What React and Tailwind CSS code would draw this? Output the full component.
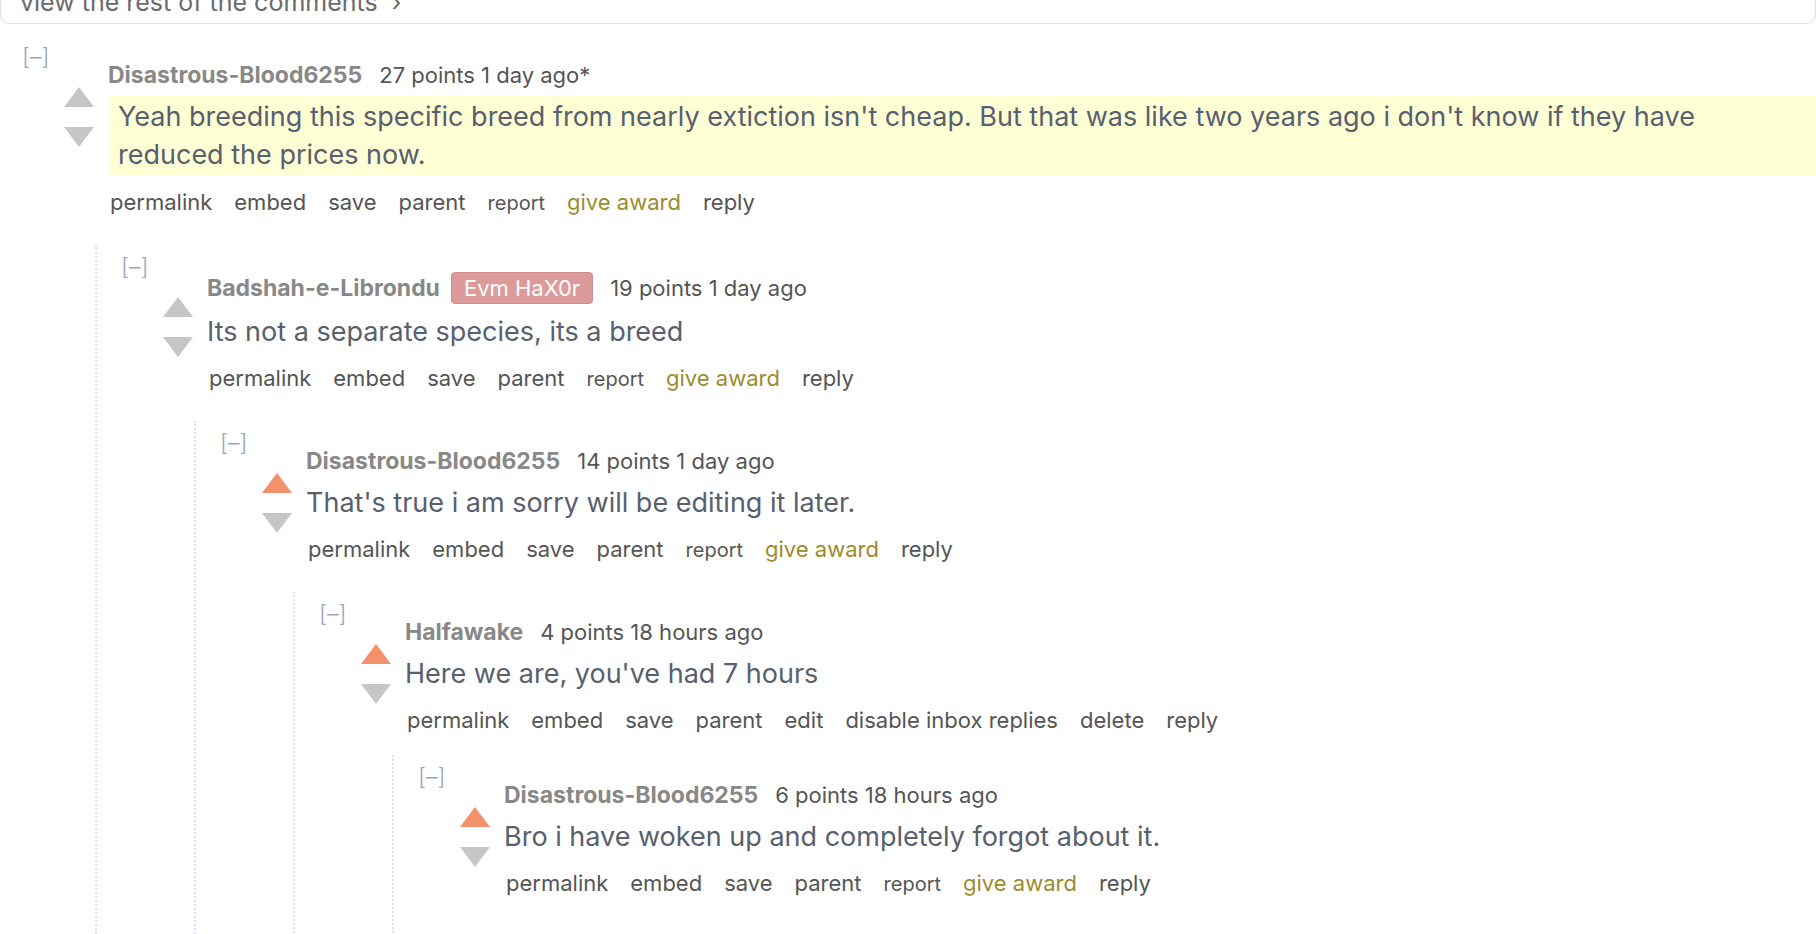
import React from "react";

const comments = {
    user: "Disastrous-Blood6255",
    meta: "27 points 1 day ago*",
    body: "Yeah breeding this specific breed from nearly extiction isn't cheap. But that was like two years ago i don't know if they have reduced the prices now.",
    highlight: true,
    reply: {
        user: "Badshah-e-Librondu",
        flair: "Evm HaX0r",
        meta: "19 points 1 day ago",
        body: "Its not a separate species, its a breed",
        reply: {
            user: "Disastrous-Blood6255",
            meta: "14 points 1 day ago",
            body: "That's true i am sorry will be editing it later.",
            upvoted: true,
            reply: {
                user: "Halfawake",
                meta: "4 points 18 hours ago",
                body: "Here we are, you've had 7 hours",
                upvoted: true,
                mine: true,
                reply: {
                    user: "Disastrous-Blood6255",
                    meta: "6 points 18 hours ago",
                    body: "Bro i have woken up and completely forgot about it.",
                    upvoted: true,
                    last: true,
                },
            },
        },
    },
};

function Arrow({dir, on}) {
    return (
        <svg width="30" height="20" viewBox="0 0 30 20" className="block">
            {dir === "up"
                ? <polygon points="15,0 30,20 0,20" fill={on ? "#f2916a" : "#c6c6c6"}/>
                : <polygon points="0,0 30,0 15,20" fill="#c6c6c6"/>}
        </svg>
    );
}

function Actions({mine}) {
    if (mine) {
        return (
            <div className="flex items-baseline gap-[22px] text-[22px] leading-[28px] text-[#555]">
                <span>permalink</span>
                <span>embed</span>
                <span>save</span>
                <span>parent</span>
                <span>edit</span>
                <span>disable inbox replies</span>
                <span>delete</span>
                <span>reply</span>
            </div>
        );
    }
    return (
        <div className="flex items-baseline gap-[22px] pb-[7px] text-[22px] leading-[28px] text-[#555]">
            <span>permalink</span>
            <span>embed</span>
            <span>save</span>
            <span>parent</span>
            <span className="text-[20px]">report</span>
            <span className="text-[#9d8b2c]">give award</span>
            <span>reply</span>
        </div>
    );
}

function Comment({c}) {
    return (
        <div>
            <div className="flex">
                <div className="w-[84px] shrink-0">
                    <div className="-ml-[2px] text-[23px] font-light leading-[20px] text-[#9aa8ba]">[–]</div>
                    <div className="ml-[40px] mt-[20px] flex flex-col gap-[20px]">
                        <Arrow dir="up" on={c.upvoted}/>
                        <Arrow dir="down"/>
                    </div>
                </div>
                <div className="flex-1 min-w-0 pt-[14px]">
                    <div className={c.flair ? "flex items-center leading-[28px] mt-[1px] mb-[3px]" : "flex items-center leading-[28px]"}>
                        <span className="text-[23px] font-bold text-[#888]">{c.user}</span>
                        {c.flair && (
                            <span className="ml-[11px] rounded-[4px] border border-[#cf8b8b] bg-[#dc9a9a] px-[12px] text-[22px] leading-[30px] text-white">{c.flair}</span>
                        )}
                        <span className="ml-[17px] text-[22px] text-[#555]">{c.meta}</span>
                    </div>
                    {c.highlight ? (
                        <div className="mt-[7px] ml-[2px] bg-[#ffffd6] px-[8px] py-[2px] text-[27px] leading-[38px] text-[#58606e]">
                            <p className="max-w-[1640px]">{c.body}</p>
                        </div>
                    ) : (
                        <div className="mt-[7px] py-[2px] text-[27px] leading-[38px] text-[#58606e]">{c.body}</div>
                    )}
                    <div className={c.highlight ? "mt-[12px] ml-[2px]" : "mt-[11px] ml-[2px]"}>
                        <Actions mine={c.mine}/>
                    </div>
                </div>
            </div>
            {c.reply && (
                <div className="ml-[71px] mt-[21px] border-l-2 border-dotted border-[#ddf] pl-[26px] pt-[12px]">
                    <Comment c={c.reply}/>
                </div>
            )}
            {c.last && <div className="h-[200px]"/>}
        </div>
    );
}

export default function App() {
    return (
        <div className="h-[934px] overflow-hidden bg-white font-['Inter',sans-serif]">
            <div className="h-[24px] overflow-hidden rounded-b-[10px] border border-t-0 border-[#e2e2e2]">
                <div className="-mt-[12px] pl-[19px] text-[25px] leading-[28px] text-[#6b6b6b]">view the rest of the comments &nbsp;›</div>
            </div>
            <div className="pl-[24px] pt-[23px]">
                <Comment c={comments}/>
            </div>
        </div>
    );
}
